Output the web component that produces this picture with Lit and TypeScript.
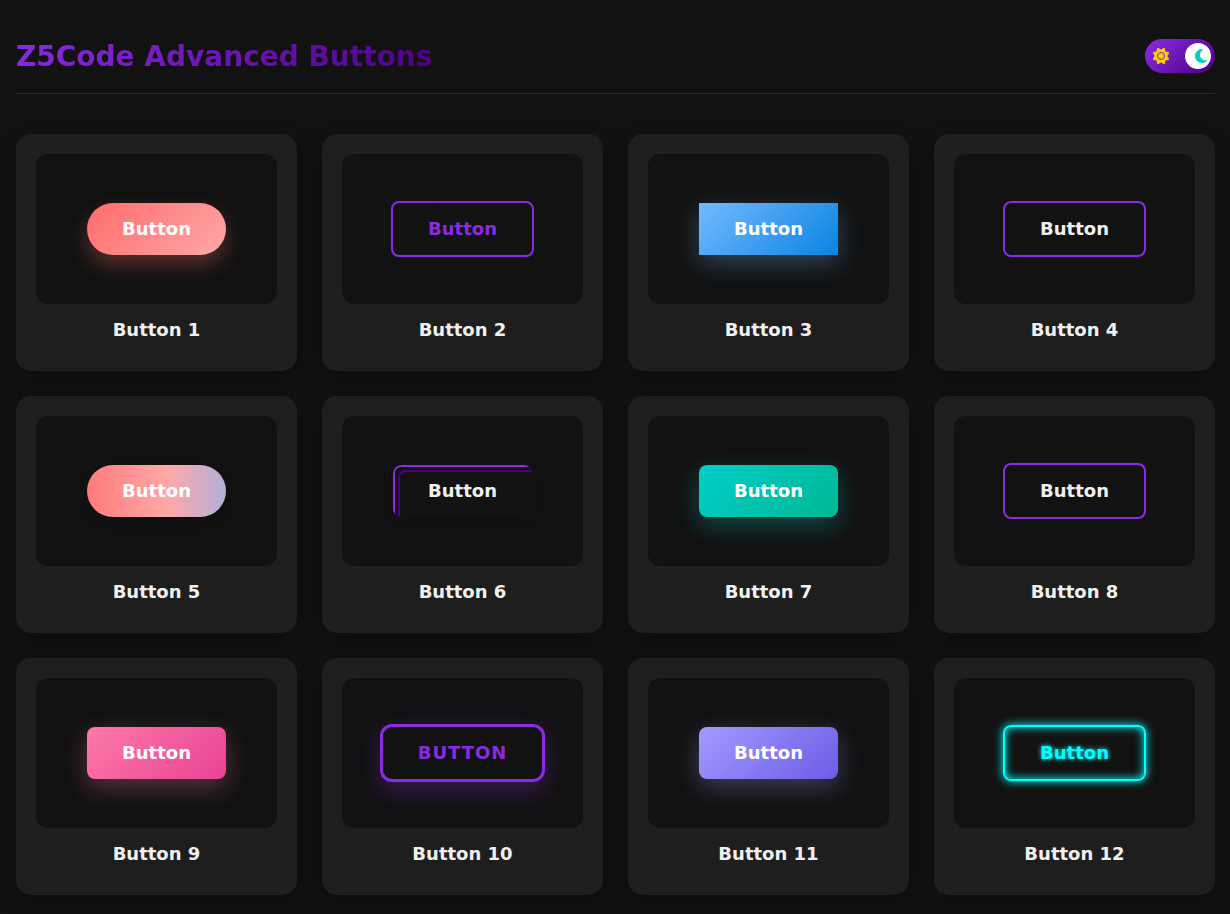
import { LitElement, html, css } from "lit";
import { customElement, state } from "lit/decorators.js";
import { classMap } from "lit/directives/class-map.js";

const VARIANTS = [
  "coral", "outline", "sky", "frame", "sweep", "layers",
  "teal", "frame", "pink", "bold", "violet", "neon",
];

@customElement("button-card")
class ButtonCard extends LitElement {
  static properties = {
    variant: { type: String },
    number: { type: Number },
  };

  declare variant: string;
  declare number: number;

  static styles = css`
    :host {
      display: block;
      padding: 20px;
      border-radius: 15px;
      background: #1e1e1e;
      box-shadow: 0 8px 25px rgba(0, 0, 0, 0.3);
    }
    .preview {
      display: flex;
      align-items: center;
      justify-content: center;
      height: 150px;
      border-radius: 12px;
      background: #121212;
    }
    .title {
      margin: 15px 0 10px;
      color: #f0f0f0;
      font-size: 18px;
      font-weight: 600;
      line-height: 22px;
      text-align: center;
    }
    .btn {
      position: relative;
      padding: 15px 35px;
      border: 0;
      border-radius: 8px;
      background: transparent;
      color: #fff;
      font: 600 18px/22px "DejaVu Sans", sans-serif;
      cursor: pointer;
    }
    .coral {
      border-radius: 50px;
      background: linear-gradient(135deg, #ff6b6b, #ffa8a8);
      box-shadow: 0 10px 20px rgba(255, 107, 107, 0.3);
    }
    .outline {
      border: 2px solid #8a2be2;
      color: #8a2be2;
    }
    .sky {
      border-radius: 0;
      background: linear-gradient(135deg, #74b9ff, #0984e3);
      box-shadow: 0 8px 25px rgba(116, 185, 255, 0.3);
    }
    .frame {
      border: 2px solid #8a2be2;
      color: #f0f0f0;
    }
    .sweep {
      border-radius: 50px;
      background: linear-gradient(90deg, #ff7b7b, #ffa8a8 58%, #b2b0da);
      box-shadow: 0 5px 15px rgba(0, 0, 0, 0.2);
    }
    .layers {
      overflow: hidden;
      color: #f0f0f0;
      box-shadow: 0 5px 15px rgba(0, 0, 0, 0.1);
    }
    .layers::before,
    .layers::after {
      content: "";
      position: absolute;
      top: 0;
      left: 0;
      width: 100%;
      height: 100%;
      border: 2px solid #8a2be2;
      border-radius: 8px;
    }
    .layers::after {
      top: 5px;
      left: 5px;
      border-color: #4b0082;
    }
    .teal {
      background: linear-gradient(135deg, #00cec9, #00b894);
      box-shadow: 0 8px 25px rgba(0, 206, 201, 0.3);
    }
    .pink {
      background: linear-gradient(135deg, #fd79a8, #e84393);
      box-shadow: 0 8px 25px rgba(253, 121, 168, 0.3);
    }
    .bold {
      border: 3px solid #8a2be2;
      border-radius: 12px;
      background: #121212;
      color: #8a2be2;
      letter-spacing: 1px;
      text-transform: uppercase;
      box-shadow: 0 8px 25px rgba(138, 43, 226, 0.3);
    }
    .violet {
      background: linear-gradient(135deg, #a29bfe, #6c5ce7);
      box-shadow: 0 8px 25px rgba(162, 155, 254, 0.3);
    }
    .neon {
      border: 2px solid #0ff;
      color: #0ff;
      text-shadow: 0 0 5px #0ff;
      box-shadow: 0 0 10px #0ff, inset 0 0 10px #0ff;
    }
  `;

  render() {
    return html`
      <div class="preview">
        <button class=${classMap({ btn: true, [this.variant]: true })} type="button">Button</button>
      </div>
      <h3 class="title">Button ${this.number}</h3>
    `;
  }
}

@customElement("app-root")
class AppRoot extends LitElement {
  @state() private dark = true;

  static styles = css`
    :host {
      display: block;
      box-sizing: border-box;
      min-height: 100vh;
      padding: 39px 15px 19px 16px;
      background: #121212;
      color: #f0f0f0;
      font-family: "DejaVu Sans", sans-serif;
    }
    .header {
      display: flex;
      align-items: flex-start;
      justify-content: space-between;
      padding-bottom: 18px;
      margin-bottom: 40px;
      border-bottom: 1px solid rgba(255, 255, 255, 0.1);
    }
    .brand {
      margin: 0;
      background: linear-gradient(135deg, #8a2be2, #4b0082);
      -webkit-background-clip: text;
      background-clip: text;
      color: transparent;
      font-size: 28px;
      font-weight: 700;
      line-height: 36px;
    }
    .toggle {
      position: relative;
      display: flex;
      align-items: center;
      justify-content: space-between;
      box-sizing: border-box;
      width: 70px;
      height: 34px;
      padding: 0 8px;
      border-radius: 34px;
      background: linear-gradient(135deg, #8a2be2, #4b0082);
      cursor: pointer;
    }
    .check {
      position: absolute;
      inset: 0;
      margin: 0;
      opacity: 0;
      cursor: pointer;
    }
    .knob {
      position: absolute;
      top: 4px;
      left: 4px;
      width: 26px;
      height: 26px;
      border-radius: 50%;
      background: #fff;
    }
    .knob.on {
      left: 40px;
    }
    .icon {
      position: relative;
      height: 16px;
      pointer-events: none;
    }
    .sun {
      fill: #ffd000;
    }
    .rays {
      stroke: #ffd000;
      stroke-width: 20;
      stroke-linejoin: round;
    }
    .ring {
      fill: none;
      stroke: #7623c6;
      stroke-width: 32;
    }
    .moon {
      fill: #00cec9;
    }
    .grid {
      display: grid;
      grid-template-columns: repeat(auto-fill, minmax(250px, 1fr));
      gap: 25px;
    }
  `;

  render() {
    return html`
      <header class="header">
        <h1 class="brand">Z5Code Advanced Buttons</h1>
        <label class="toggle">
          <input
            class="check"
            type="checkbox"
            aria-label="Dark mode"
            .checked=${this.dark}
            @change=${(e: Event) => (this.dark = (e.target as HTMLInputElement).checked)}
          />
          <span class=${classMap({ knob: true, on: this.dark })}></span>
          <svg class="icon sun" viewBox="0 0 512 512" width="16" aria-hidden="true">
            <path class="rays" d="M361.5 1.2c5 2.1 8.6 6.6 9.6 11.9L391 121l107.9 19.8c5.3 1 9.8 4.6 11.9 9.6s1.5 10.7-1.6 15.2L446.9 256l62.3 90.3c3.1 4.5 3.7 10.2 1.6 15.2s-6.6 8.6-11.9 9.6L391 391 371.1 498.9c-1 5.3-4.6 9.8-9.6 11.9s-10.7 1.5-15.2-1.6L256 446.9l-90.3 62.3c-4.5 3.1-10.2 3.7-15.2 1.6s-8.6-6.6-9.6-11.9L121 391 13.1 371.1c-5.3-1-9.8-4.6-11.9-9.6s-1.5-10.7 1.6-15.2L65.1 256 2.8 165.7c-3.1-4.5-3.7-10.2-1.6-15.2s6.6-8.6 11.9-9.6L121 121 140.9 13.1c1-5.3 4.6-9.8 9.6-11.9s10.7-1.5 15.2 1.6L256 65.1 346.3 2.8c4.5-3.1 10.2-3.7 15.2-1.6z" />
            <circle class="ring" cx="256" cy="256" r="112" />
          </svg>
          <svg class="icon moon" viewBox="0 0 384 512" width="12" aria-hidden="true">
            <path d="M223.5 32C100 32 0 132.3 0 256S100 480 223.5 480c60.6 0 115.5-24.2 155.8-63.4c5-4.9 6.3-12.5 3.1-18.7s-10.1-9.7-17-8.5c-9.8 1.7-19.8 2.6-30.1 2.6c-96.9 0-175.5-78.8-175.5-176c0-65.8 36-123.1 89.3-153.3c6.1-3.5 9.2-10.5 7.7-17.3s-7.3-11.9-14.3-12.5c-6.3-.5-12.6-.8-19-.8z" />
          </svg>
        </label>
      </header>
      <main class="grid">
        ${VARIANTS.map(
          (variant, i) => html`<button-card .variant=${variant} .number=${i + 1}></button-card>`
        )}
      </main>
    `;
  }
}
